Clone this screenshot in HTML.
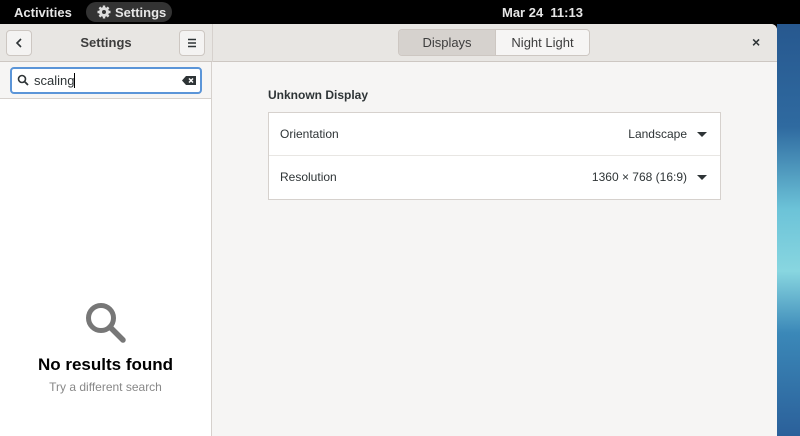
<!DOCTYPE html>
<html><head><style>
*{box-sizing:border-box;margin:0;padding:0}
body{width:800px;height:436px;overflow:hidden;font-family:"Liberation Sans",sans-serif;background:#000;position:relative;font-size:13px;color:#2e3436}
.top{position:absolute;left:0;top:0;width:800px;height:24px;background:#000;color:#e6e6e6;font-size:13px;font-weight:bold}
.wall{position:absolute;left:777px;top:24px;width:23px;height:412px;background:linear-gradient(180deg,#27588f 0%,#2f6aa0 25%,#6cc3d8 45%,#88d6e0 60%,#3b88b8 75%,#2b609a 100%)}
.win{position:absolute;left:0;top:24px;width:777px;height:412px;background:#f6f5f4;border-top-right-radius:6px;overflow:hidden}
.hb{position:absolute;left:0;top:0;width:777px;height:38px;background:#e8e6e3;border-bottom:1px solid #cdc7c2}
.side{position:absolute;left:0;top:38px;width:212px;height:374px;background:#fff;border-right:1px solid #d6d1cd}
.btn{position:absolute;width:26px;height:26px;border:1px solid #cdc7c2;border-radius:4px;background:#f4f3f2}
</style></head><body>
<div class="top">
 <div style="position:absolute;left:14px;top:5px">Activities</div>
 <div style="position:absolute;left:86px;top:2px;width:86px;height:20px;border-radius:10px;background:#333"></div>
 <svg style="position:absolute;left:97px;top:5px" width="14" height="14" viewBox="0 0 14 14"><circle cx="7" cy="7" r="5" fill="#ddd"/><g stroke="#ddd" stroke-width="2.4"><path d="M7 0.5v13M0.5 7h13M2.4 2.4l9.2 9.2M11.6 2.4l-9.2 9.2"/></g><circle cx="7" cy="7" r="2" fill="#333"/></svg>
 <div style="position:absolute;left:115px;top:5px">Settings</div>
 <div style="position:absolute;left:502px;top:5px">Mar 24&nbsp; 11:13</div>
</div>
<div class="wall"></div>
<div class="win">
 <div class="hb">
  <div class="btn" style="left:6px;top:6px"><svg width="24" height="24"><path d="M14 8l-4 4 4 4" stroke="#2e3436" stroke-width="1.6" fill="none"/></svg></div>
  <div style="position:absolute;left:0;width:212px;top:11px;text-align:center;font-weight:bold;color:#3d3d3d">Settings</div>
  <div class="btn" style="left:179px;top:6px"><svg width="24" height="24"><path d="M8 8.5h8M8 12h8M8 15.5h8" stroke="#2e3436" stroke-width="1.6"/></svg></div>
  <div style="position:absolute;left:212px;top:0;width:1px;height:38px;background:#d6d1cd"></div>
  <div style="position:absolute;left:398px;top:5px;width:192px;height:27px;border:1px solid #cdc7c2;border-radius:4px;overflow:hidden;display:flex">
   <div style="width:96px;background:#d6d2ce;text-align:center;line-height:25px;color:#3d3d3d">Displays</div>
   <div style="flex:1;background:#f6f5f4;text-align:center;line-height:25px;border-left:1px solid #cdc7c2;color:#3d3d3d">Night Light</div>
  </div>
  <div style="position:absolute;left:752px;top:10px;font-weight:bold;font-size:14px">×</div>
 </div>
 <div class="side">
  <div style="position:absolute;left:0;top:0;width:211px;height:37px;background:#f6f5f4;border-bottom:1px solid #d6d1cd"></div>
  <div style="position:absolute;left:10px;top:5px;width:192px;height:27px;border:2px solid #5b95d8;border-radius:4px;background:#fff"></div>
  <svg style="position:absolute;left:17px;top:12px" width="12" height="12"><circle cx="5" cy="5" r="3.5" stroke="#2e3436" stroke-width="1.6" fill="none"/><path d="M7.5 7.5l3.5 3.5" stroke="#2e3436" stroke-width="1.8"/></svg>
  <div style="position:absolute;left:34px;top:11px;color:#2e3436">scaling<span style="display:inline-block;width:1px;height:15px;background:#000;vertical-align:-3px"></span></div>
  <svg style="position:absolute;left:182px;top:13px" width="14" height="11"><path d="M0 5.5L4 1h10v9H4z" fill="#2e3436"/><path d="M7 3.5l4 4M11 3.5l-4 4" stroke="#fff" stroke-width="1.5"/></svg>
  <svg style="position:absolute;left:82px;top:237px" width="48" height="48"><circle cx="19" cy="19" r="12.5" stroke="#777" stroke-width="5" fill="none"/><path d="M28 28l13 13" stroke="#777" stroke-width="5.5" stroke-linecap="round"/></svg>
  <div style="position:absolute;left:0;width:211px;top:293px;text-align:center;font-weight:bold;font-size:17px;color:#000">No results found</div>
  <div style="position:absolute;left:0;width:211px;top:318px;text-align:center;font-size:12px;color:#888">Try a different search</div>
 </div>
 <div style="position:absolute;left:268px;top:64px;font-weight:bold;font-size:12px">Unknown Display</div>
 <div style="position:absolute;left:268px;top:88px;width:453px;height:88px;background:#fff;border:1px solid #d6d1cd">
  <div style="height:43px;border-bottom:1px solid #e8e6e3;position:relative">
   <div style="position:absolute;left:11px;top:14px;font-size:12px">Orientation</div>
   <div style="position:absolute;right:33px;top:14px;font-size:12px">Landscape</div>
   <div style="position:absolute;right:13px;top:19px;border:5px solid transparent;border-top:5px solid #2e3436;border-bottom:0"></div>
  </div>
  <div style="height:43px;position:relative">
   <div style="position:absolute;left:11px;top:14px;font-size:12px">Resolution</div>
   <div style="position:absolute;right:33px;top:14px;font-size:12px">1360 × 768 (16:9)</div>
   <div style="position:absolute;right:13px;top:19px;border:5px solid transparent;border-top:5px solid #2e3436;border-bottom:0"></div>
  </div>
 </div>
</div>
</body></html>
